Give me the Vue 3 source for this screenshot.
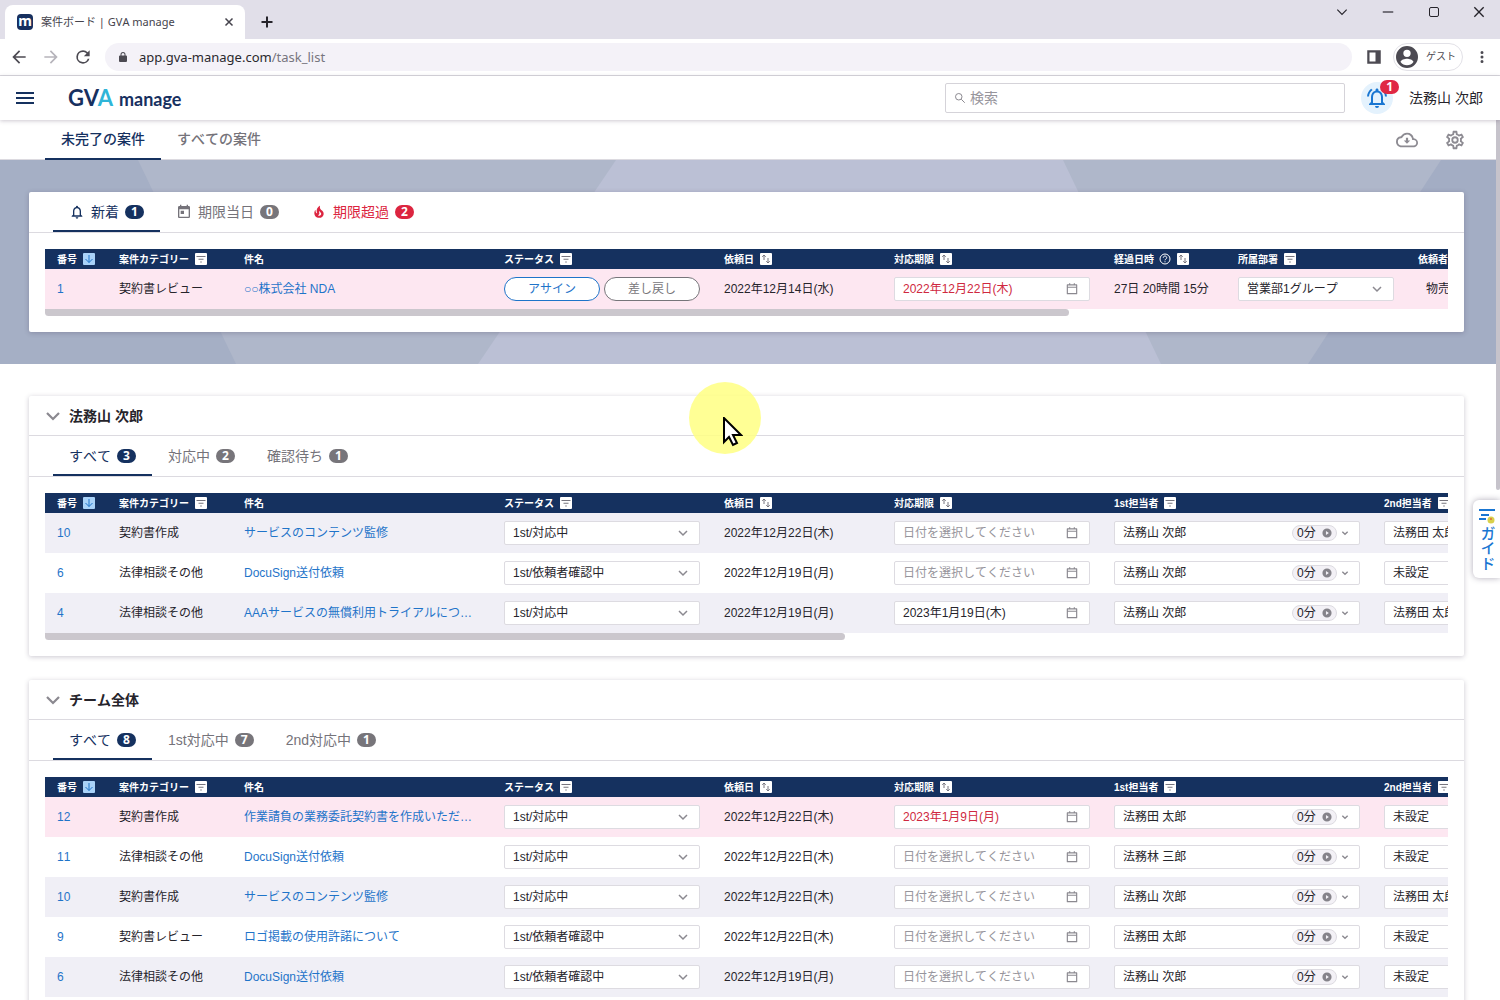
<script setup>
import { h } from 'vue'

const fillIcons = {
  back: 'M20 11H7.8l5.6-5.6L12 4l-8 8 8 8 1.4-1.4L7.8 13H20z',
  forward: 'M4 11h12.2l-5.6-5.6L12 4l8 8-8 8-1.4-1.4 5.6-5.6H4z',
  reload: 'M17.65 6.35A7.95 7.95 0 0 0 12 4a8 8 0 1 0 7.73 10h-2.08A6 6 0 1 1 12 6c1.66 0 3.14.69 4.22 1.78L13 11h7V4z',
  lock: 'M18 9h-1V7A5 5 0 0 0 7 7v2H6a2 2 0 0 0-2 2v9a2 2 0 0 0 2 2h12a2 2 0 0 0 2-2v-9a2 2 0 0 0-2-2zM9 9V7a3 3 0 0 1 6 0v2z',
  panel: 'M3 3h18v18H3zM6 6v12h8V6z',
  avatar: 'M12 0a12 12 0 1 0 0 24 12 12 0 0 0 0-24zm0 4a4 4 0 1 1 0 8 4 4 0 0 1 0-8zm0 17a9 9 0 0 1-7-3.6c0-2.3 4.7-3.6 7-3.6s7 1.300 7 3.600A9 9 0 0 1 12 21z',
  dots: 'M12 8a2 2 0 1 0 0-4 2 2 0 0 0 0 4zm0 2a2 2 0 1 0 0 4 2 2 0 0 0 0-4zm0 6a2 2 0 1 0 0 4 2 2 0 0 0 0-4z',
  menu: 'M0 4h24v2.600H0zm0 6.700h24v2.600H0zm0 6.700h24V20H0z',
  ringing: 'M7.580 4.080 6.150 2.650C3.750 4.480 2.170 7.300 2.030 10.500h2c.15-2.650 1.510-4.970 3.550-6.420zm12.390 6.420h2c-.15-3.200-1.730-6.020-4.120-7.850l-1.420 1.430c2.020 1.450 3.390 3.770 3.540 6.420zM18 11c0-3.070-1.640-5.640-4.500-6.320V4c0-.83-.67-1.500-1.500-1.500s-1.500.67-1.500 1.500v.68C7.630 5.360 6 7.920 6 11v5l-2 2v1h16v-1l-2-2zm-2 6H8v-6c0-2.480 1.510-4.500 4-4.500s4 2.020 4 4.500zm-4 5a2 2 0 0 0 2-2h-4a2 2 0 0 0 2 2z',
  bell: 'M12 22a2 2 0 0 0 2-2h-4c0 1.100.9 2 2 2zm6-6v-5c0-3.070-1.630-5.640-4.500-6.320V4a1.500 1.500 0 0 0-3 0v.68C7.640 5.360 6 7.920 6 11v5l-2 2v1h16v-1zm-2 1H8v-6c0-2.480 1.510-4.500 4-4.500s4 2.020 4 4.500z',
  today: 'M19 3h-1V1h-2v2H8V1H6v2H5a2 2 0 0 0-2 2v14c0 1.100.9 2 2 2h14a2 2 0 0 0 2-2V5a2 2 0 0 0-2-2zm0 16H5V8h14zM7 10h5v5H7z',
  fire: 'M19.480 12.350c-1.570-4.080-7.160-4.300-5.810-10.230.1-.44-.37-.78-.75-.55C9.290 3.710 6.680 8 8.870 13.620c.18.46-.36.890-.75.590-1.810-1.370-2-3.340-1.840-4.750.06-.52-.62-.77-.91-.34C4.690 10.160 4 11.840 4 14.370c.38 5.600 5.110 7.320 6.810 7.540 2.430.31 5.060-.14 6.950-1.870 2.080-1.930 2.840-5.010 1.720-7.690zm-9.280 5.030c1.440-.35 2.180-1.390 2.380-2.310.33-1.430-.96-2.830-.09-5.090.33 1.870 3.270 3.040 3.270 5.080.08 2.530-2.660 4.700-5.560 2.320z',
  play: 'M12 1a11 11 0 1 0 0 22 11 11 0 0 0 0-22zM9.500 17V7l7 5z',
  cloud: 'M19.350 10.040A7.490 7.490 0 0 0 12 4C9.110 4 6.600 5.640 5.350 8.040A5.994 5.994 0 0 0 0 14c0 3.310 2.690 6 6 6h13c2.760 0 5-2.240 5-5 0-2.640-2.050-4.780-4.650-4.960zM19 18H6a4 4 0 0 1-.44-7.970l1.070-.11.5-.95A5.470 5.470 0 0 1 12 6c2.620 0 4.880 1.860 5.390 4.430l.3 1.500 1.530.11A2.980 2.980 0 0 1 19 18zm-5.800-8.500h-2.400v3H8.500l3.500 3.500 3.500-3.500h-2.300z',
  gear: 'M19.430 12.980c.04-.32.07-.64.07-.98s-.03-.66-.07-.98l2.110-1.650c.19-.15.24-.42.12-.64l-2-3.460a.5.5 0 0 0-.61-.22l-2.490 1a7.300 7.300 0 0 0-1.690-.98l-.38-2.650A.49.49 0 0 0 14 2h-4a.49.49 0 0 0-.49.420l-.38 2.650c-.61.250-1.170.590-1.690.98l-2.490-1a.5.5 0 0 0-.61.220l-2 3.460c-.13.220-.07.490.12.640l2.110 1.650a7.900 7.900 0 0 0 0 1.960l-2.110 1.650a.5.5 0 0 0-.12.640l2 3.460c.12.220.39.300.61.220l2.490-1c.52.400 1.080.730 1.690.980l.38 2.650c.03.240.24.420.49.420h4c.25 0 .46-.18.490-.42l.38-2.650c.61-.25 1.170-.59 1.690-.98l2.490 1c.23.090.49 0 .61-.22l2-3.460a.5.5 0 0 0-.12-.64zm-1.980-1.710c.04.310.05.520.05.730s-.02.430-.05.730l-.14 1.130.89.700 1.080.840-.7 1.210-1.270-.51-1.040-.42-.9.680c-.43.320-.84.560-1.250.730l-1.060.43-.16 1.130-.2 1.350h-1.400l-.19-1.350-.16-1.130-1.060-.43c-.43-.18-.83-.41-1.230-.71l-.91-.7-1.060.43-1.270.51-.7-1.210 1.080-.84.890-.7-.14-1.130a7 7 0 0 1 0-1.480l.14-1.130-.89-.7-1.080-.84.7-1.210 1.270.510 1.040.420.9-.68c.43-.32.840-.56 1.250-.73l1.060-.43.160-1.130.2-1.350h1.390l.19 1.350.16 1.130 1.060.430c.43.180.83.410 1.230.710l.91.700 1.060-.43 1.270-.51.7 1.210-1.070.850-.89.700zM12 8a4 4 0 1 0 0 8 4 4 0 0 0 0-8zm0 6a2 2 0 1 1 0-4 2 2 0 0 1 0 4z',
  calendar: 'M20 4h-3V2h-2v2H9V2H7v2H4a1 1 0 0 0-1 1v15a1 1 0 0 0 1 1h16a1 1 0 0 0 1-1V5a1 1 0 0 0-1-1zm-1 15H5V10h14zM5 8V6h14v2z'
}

const lineIcons = {
  close: 'M5 5l14 14M19 5L5 19',
  plus: 'M12 1v22M1 12h22',
  chevron: 'M4 8l8 8 8-8',
  minimize: 'M3 12h18',
  maximize: 'M6 3h12q3 0 3 3v12q0 3-3 3H6q-3 0-3-3V6q0-3 3-3z',
  search: 'M9.500 3a6.500 6.500 0 1 1 0 13 6.500 6.500 0 0 1 0-13M14.500 14.500l7 7',
  down: 'M12 4v15M5 12l7 7 7-7',
  filter: 'M3 7h18M7 12.500h10M10.500 18h3',
  sort: 'M8 14V4M4.500 7.500L8 4l3.500 3.500M16 10v10M12.500 16.500L16 20l3.500-3.500',
  help: 'M12 2a10 10 0 1 1 0 20 10 10 0 0 1 0-20M8.500 9.500c0-4.500 7-4.500 7 0 0 2.500-3.500 2.500-3.500 5M12 16.500v2'
}

const Icon = (props) =>
  h('svg', { viewBox: '0 0 24 24', class: 'icon', 'aria-hidden': 'true' }, [
    fillIcons[props.name]
      ? h('path', { d: fillIcons[props.name], fill: 'currentColor', 'fill-rule': 'evenodd' })
      : h('path', { d: lineIcons[props.name], fill: 'none', stroke: 'currentColor', 'stroke-width': props.weight || 2 })
  ])
Icon.props = ['name', 'weight']

const baseColumns = [
  { label: '番号', width: 62, tool: 'down' },
  { label: '案件カテゴリー', width: 125, tool: 'filter' },
  { label: '件名', width: 260 },
  { label: 'ステータス', width: 220, tool: 'filter' },
  { label: '依頼日', width: 170, tool: 'sort' },
  { label: '対応期限', width: 220, tool: 'sort' }
]
const newColumns = [
  ...baseColumns,
  { label: '経過日時', width: 124, tool: 'sort', help: true },
  { label: '所属部署', width: 180, tool: 'filter' },
  { label: '依頼者', width: 180 }
]
const taskColumns = [
  ...baseColumns,
  { label: '1st担当者', width: 270, tool: 'filter' },
  { label: '2nd担当者', width: 270, tool: 'filter' }
]

const row = (id, category, title, status, requested, due, first, second, late) =>
  ({ id, category, title, status, requested, due, first, second, late })

const working = '1st/対応中'
const checking = '1st/依頼者確認中'
const cards = [
  {
    tabs: [
      { label: '新着', count: 1, icon: 'bell' },
      { label: '期限当日', count: 0, icon: 'today' },
      { label: '期限超過', count: 2, icon: 'fire', alert: true }
    ],
    columns: newColumns,
    thumb: 73,
    rows: [{
      ...row(1, '契約書レビュー', '○○株式会社 NDA', '', '2022年12月14日(水)', '2022年12月22日(木)', '', '', true),
      elapsed: '27日 20時間 15分', department: '営業部1グループ', requester: '物売 太郎'
    }]
  },
  {
    title: '法務山 次郎',
    tabs: [
      { label: 'すべて', count: 3 },
      { label: '対応中', count: 2 },
      { label: '確認待ち', count: 1 }
    ],
    columns: taskColumns,
    thumb: 57,
    rows: [
      row(10, '契約書作成', 'サービスのコンテンツ監修', working, '2022年12月22日(木)', '', '法務山 次郎', '法務田 太郎'),
      row(6, '法律相談その他', 'DocuSign送付依頼', checking, '2022年12月19日(月)', '', '法務山 次郎', '未設定'),
      row(4, '法律相談その他', 'AAAサービスの無償利用トライアルにつ…', working, '2022年12月19日(月)', '2023年1月19日(木)', '法務山 次郎', '法務田 太郎')
    ]
  },
  {
    title: 'チーム全体',
    tabs: [
      { label: 'すべて', count: 8 },
      { label: '1st対応中', count: 7 },
      { label: '2nd対応中', count: 1 }
    ],
    columns: taskColumns,
    thumb: 57,
    rows: [
      row(12, '契約書作成', '作業請負の業務委託契約書を作成いただ…', working, '2022年12月22日(木)', '2023年1月9日(月)', '法務田 太郎', '未設定', true),
      row(11, '法律相談その他', 'DocuSign送付依頼', working, '2022年12月22日(木)', '', '法務林 三郎', '未設定'),
      row(10, '契約書作成', 'サービスのコンテンツ監修', working, '2022年12月22日(木)', '', '法務山 次郎', '法務田 太郎'),
      row(9, '契約書レビュー', 'ロゴ掲載の使用許諾について', checking, '2022年12月22日(木)', '', '法務田 太郎', '未設定'),
      row(6, '法律相談その他', 'DocuSign送付依頼', checking, '2022年12月19日(月)', '', '法務山 次郎', '未設定'),
      row(4, '法律相談その他', 'AAAサービスの無償利用トライアルにつ…', working, '2022年12月19日(月)', '2023年1月19日(木)', '法務山 次郎', '法務田 太郎')
    ]
  }
]
</script>

<template>
  <div class="window">
    <div class="tabstrip">
      <div class="browser-tab">
        <span class="favicon">m</span>
        <span class="tab-title">案件ボード | GVA manage</span>
        <button class="plain" aria-label="タブを閉じる"><Icon name="close" weight="3" class="s12" /></button>
      </div>
      <button class="plain new-tab" aria-label="新しいタブ"><Icon name="plus" weight="4" class="s12" /></button>
      <div class="window-buttons">
        <button class="plain" aria-label="タブを検索"><Icon name="chevron" class="s14" /></button>
        <button class="plain" aria-label="最小化"><Icon name="minimize" class="s14" /></button>
        <button class="plain" aria-label="最大化"><Icon name="maximize" class="s12" /></button>
        <button class="plain" aria-label="閉じる"><Icon name="close" class="s16" /></button>
      </div>
    </div>

    <div class="toolbar">
      <button class="plain" aria-label="戻る"><Icon name="back" class="s20" /></button>
      <button class="plain disabled" aria-label="進む"><Icon name="forward" class="s20" /></button>
      <button class="plain" aria-label="再読み込み"><Icon name="reload" class="s20" /></button>
      <div class="address">
        <Icon name="lock" class="s12" />
        <span class="url">app.gva-manage.com<span class="path">/task_list</span></span>
      </div>
      <button class="plain panel" aria-label="サイドパネル"><Icon name="panel" class="s18" /></button>
      <button class="profile"><Icon name="avatar" class="s22" />ゲスト</button>
      <button class="plain more" aria-label="メニュー"><Icon name="dots" class="s18" /></button>
    </div>

    <header class="app-header">
      <button class="plain navy" aria-label="ナビゲーション"><Icon name="menu" class="s18" /></button>
      <a href="#" class="logo"><span class="gv">GV<span class="cyan">A</span></span><span class="product">manage</span></a>
      <label class="search">
        <Icon name="search" class="s12" />
        <input type="text" placeholder="検索" aria-label="検索">
      </label>
      <button class="notify" aria-label="通知"><Icon name="ringing" class="s24" /><span class="badge red">1</span></button>
      <span class="user">法務山 次郎</span>
    </header>

    <div class="viewport">
      <main class="page">
        <nav class="main-tabs">
          <a href="#" class="main-tab active">未完了の案件</a>
          <a href="#" class="main-tab">すべての案件</a>
          <div class="page-tools">
            <button class="plain" aria-label="ダウンロード"><Icon name="cloud" class="s22" /></button>
            <button class="plain" aria-label="設定"><Icon name="gear" class="s22" /></button>
          </div>
        </nav>

        <div v-for="(card, c) in cards" :key="c" :class="c === 0 ? 'hero' : 'section'">
          <svg v-if="c === 0" class="backdrop" viewBox="0 0 1496 204" preserveAspectRatio="none" aria-hidden="true">
            <path fill="#afb7ca" d="M0 0h1496v204H0z" />
            <path fill="#a5afc5" d="M0 0h138l98 204H0z" />
            <path fill="#bbc0d5" d="M616 0h447l98 204H478z" />
            <path fill="#a3adc4" d="M1441 0h55v204h-188z" />
          </svg>
          <section class="card">
            <h2 v-if="card.title" class="card-title"><Icon name="chevron" weight="3" class="s18" />{{ card.title }}</h2>
            <div class="tabs">
              <button v-for="(tab, t) in card.tabs" :key="t" class="tab" :class="{ active: t === 0, alert: tab.alert }">
                <Icon v-if="tab.icon" :name="tab.icon" class="s16" />
                {{ tab.label }}
                <span class="badge">{{ tab.count }}</span>
              </button>
            </div>
            <div class="table-area">
              <div class="table-scroll">
                <table>
                  <colgroup>
                    <col v-for="col in card.columns" :key="col.label" :style="{ width: col.width + 'px' }">
                  </colgroup>
                  <thead>
                    <tr>
                      <th v-for="col in card.columns" :key="col.label" scope="col">
                        <div class="th">
                          <span>{{ col.label }}</span>
                          <Icon v-if="col.help" name="help" weight="2" class="s12" />
                          <button v-if="col.tool" class="tool" :class="{ on: col.tool === 'down' }" :aria-label="col.label + 'の並び替え・絞り込み'">
                            <Icon :name="col.tool" weight="2" class="s12" />
                          </button>
                        </div>
                      </th>
                    </tr>
                  </thead>
                  <tbody>
                    <tr v-for="item in card.rows" :key="item.id" :class="{ late: item.late }">
                      <td><a href="#">{{ item.id }}</a></td>
                      <td>{{ item.category }}</td>
                      <td><a href="#">{{ item.title }}</a></td>
                      <td>
                        <div v-if="item.status" class="field">
                          <select :aria-label="'ステータス ' + item.id"><option>{{ item.status }}</option></select>
                          <Icon name="chevron" weight="3" class="s12" />
                        </div>
                        <div v-else class="actions">
                          <button class="pill assign">アサイン</button>
                          <button class="pill">差し戻し</button>
                        </div>
                      </td>
                      <td>{{ item.requested }}</td>
                      <td>
                        <div class="field" :class="{ overdue: item.late }">
                          <input type="text" placeholder="日付を選択してください" :value="item.due" :aria-label="'対応期限 ' + item.id">
                          <Icon name="calendar" class="s14" />
                        </div>
                      </td>
                      <template v-if="item.elapsed">
                        <td>{{ item.elapsed }}</td>
                        <td>
                          <div class="field">
                            <select aria-label="所属部署"><option>{{ item.department }}</option></select>
                            <Icon name="chevron" weight="3" class="s12" />
                          </div>
                        </td>
                        <td><span class="requester">{{ item.requester }}</span></td>
                      </template>
                      <template v-else>
                        <td v-for="(person, p) in [item.first, item.second]" :key="p">
                          <div class="field person">
                            <select :aria-label="'担当者 ' + item.id"><option>{{ person }}</option></select>
                            <button class="timer">0分<Icon name="play" class="s10" /></button>
                            <Icon name="chevron" weight="4" class="s8" />
                          </div>
                        </td>
                      </template>
                    </tr>
                  </tbody>
                </table>
              </div>
              <div class="scroll-thumb" :style="{ width: card.thumb + '%' }"></div>
            </div>
          </section>
        </div>
      </main>
      <div class="page-scroll"><div class="page-thumb"></div></div>
    </div>

    <button class="guide">
      <svg viewBox="0 0 16 16" class="s16" aria-hidden="true">
        <path d="M0 2h16M2 7h8M0 11h7" fill="none" stroke="#1976d2" stroke-width="2" />
        <circle cx="12" cy="12" r="3.500" fill="#d9d04c" />
        <circle cx="12" cy="11" r="1" fill="#e06a3a" />
      </svg>
      <span>ガイド</span>
    </button>

    <div class="pointer">
      <svg viewBox="0 0 20 30" class="cursor" aria-hidden="true">
        <path d="M1 1v24l5-5 4 8 4-2-4-8h8z" fill="#fff" stroke="#000" stroke-width="2" />
      </svg>
    </div>
  </div>
</template>

<style>
body {
  margin: 0;
  background: #fff;
}
</style>

<style scoped>
* {
  box-sizing: border-box;
}
.window {
  height: 100vh;
  display: flex;
  flex-direction: column;
  overflow: hidden;
  color: #26242b;
  font: 12px/20px "Liberation Sans", "Noto Sans CJK JP", sans-serif;
  font-kerning: none;
}
button, input, select {
  font: inherit;
  font-kerning: none;
  color: inherit;
  margin: 0;
}
a {
  color: #1f74c9;
  text-decoration: none;
}
.icon {
  display: block;
  flex: none;
}
.s8 { width: 8px; height: 8px; }
.s10 { width: 10px; height: 10px; }
.s12 { width: 12px; height: 12px; }
.s14 { width: 14px; height: 14px; }
.s16 { width: 16px; height: 16px; }
.s18 { width: 18px; height: 18px; }
.s20 { width: 20px; height: 20px; }
.s22 { width: 22px; height: 22px; }
.s24 { width: 24px; height: 24px; }
.plain {
  display: flex;
  align-items: center;
  justify-content: center;
  padding: 0;
  border: 0;
  background: none;
}

/* Browser frame */
.tabstrip {
  flex: none;
  height: 39px;
  display: flex;
  padding-left: 5px;
  background: #e1dfe9;
}
.browser-tab {
  width: 240px;
  height: 34px;
  margin-top: 5px;
  padding: 0 10px 0 12px;
  display: flex;
  align-items: center;
  gap: 8px;
  border-radius: 8px 8px 0 0;
  background: #fff;
  color: #45434c;
  font-family: "Noto Sans", "Noto Sans CJK JP", sans-serif;
}
.favicon {
  width: 16px;
  height: 16px;
  border-radius: 4px;
  background: #17305f;
  color: #fff;
  font: bold 14px/14px "Noto Sans", sans-serif;
  text-align: center;
}
.tab-title {
  flex: 1;
  font-size: 11px;
  white-space: nowrap;
}
.new-tab {
  margin: 5px 0 0 16px;
}
.window-buttons {
  margin-left: auto;
  display: flex;
  height: 23px;
}
.window-buttons .plain {
  width: 46px;
}
.window-buttons .plain:last-child {
  width: 43px;
}
.toolbar {
  flex: none;
  height: 37px;
  display: flex;
  align-items: center;
  padding: 0 9px;
  border-bottom: 1px solid #d9d8de;
  color: #4c4a52;
  gap: 12px;
}
.disabled {
  color: #b6b4bb;
}
.address {
  flex: 1;
  height: 28px;
  padding: 0 12px;
  display: flex;
  align-items: center;
  gap: 10px;
  border-radius: 14px;
  background: #f4f2f8;
}
.url {
  color: #2a292e;
  font: 13px/20px "Noto Sans", sans-serif;
}
.path {
  color: #77757e;
}
.panel {
  margin-left: 1px;
}
.profile {
  width: 70px;
  height: 28px;
  padding: 0 2px;
  display: flex;
  align-items: center;
  gap: 8px;
  border: 1px solid #e2e1e7;
  border-radius: 14px;
  background: #fff;
  font-size: 10px;
  white-space: nowrap;
  margin-left: -2px;
}
.more {
  margin-left: -2px;
}

/* Application header */
.app-header {
  flex: none;
  position: relative;
  z-index: 1;
  height: 44px;
  display: flex;
  align-items: center;
  padding: 0 17px 0 16px;
  background: #fff;
  box-shadow: 0 1px 4px rgba(60, 40, 70, .25);
}
.navy {
  color: #15315f;
}
.logo {
  display: flex;
  align-items: baseline;
  gap: 6px;
  margin-left: 34px;
  color: #17305f;
  font: bold 18px/28px Lato, sans-serif;
}
.gv {
  font-size: 22px;
}
.cyan {
  color: #2fb5d8;
}
.search {
  width: 400px;
  height: 30px;
  margin-left: auto;
  padding: 0 8px;
  display: flex;
  align-items: center;
  gap: 4px;
  border: 1px solid #d5d3d9;
  border-radius: 2px;
  color: #8b8990;
  font-size: 14px;
}
.search input {
  flex: 1;
  min-width: 0;
  padding: 0;
  border: 0;
  outline: 0;
  background: none;
}
input::placeholder {
  color: #97959c;
  opacity: 1;
}
.notify {
  position: relative;
  width: 32px;
  height: 32px;
  margin: 0 16px;
  padding: 4px;
  border: 0;
  border-radius: 50%;
  background: #e4f2fd;
  color: #1976d2;
}
.user {
  font-size: 14px;
}
.badge {
  width: 19px;
  height: 14px;
  border-radius: 7px;
  background: #77757a;
  color: #fff;
  font: bold 12px/14px "Open Sans", sans-serif;
  text-align: center;
}
.badge.red {
  position: absolute;
  top: -2px;
  right: -6px;
  background: #e02844;
}

/* Page */
.viewport {
  flex: 1;
  min-height: 0;
  display: flex;
}
.page {
  flex: 1;
  min-width: 0;
  overflow: hidden;
}
.page-scroll {
  width: 4px;
}
.page-thumb {
  height: 42%;
  background: #c6c3cb;
  border-radius: 0 0 2px 2px;
}
.main-tabs {
  height: 40px;
  display: flex;
  padding: 0 30px 0 45px;
  border-bottom: 1px solid #dcdae0;
}
.main-tab {
  height: 40px;
  padding: 0 16px;
  border-bottom: 2px solid transparent;
  color: #75737a;
  font-size: 14px;
  font-weight: 500;
  line-height: 38px;
}
.main-tab.active {
  border-color: #15315f;
  color: #15315f;
}
.page-tools {
  display: flex;
  gap: 26px;
  margin-left: auto;
  color: #8d8b92;
}
.hero {
  position: relative;
  padding: 32px 32px 32px 29px;
  margin-bottom: 32px;
}
.backdrop {
  position: absolute;
  inset: 0;
  width: 100%;
  height: 100%;
}
.section {
  padding: 0 32px 24px 29px;
}
.card {
  position: relative;
  border-radius: 2px;
  background: #fff;
  box-shadow: 0 1px 5px rgba(50, 40, 70, .25);
}
.card-title {
  height: 40px;
  margin: 0;
  padding: 0 15px;
  display: flex;
  align-items: center;
  gap: 7px;
  border-bottom: 1px solid #dcdae0;
  font-size: 14px;
}
.card-title .icon {
  color: #8b8990;
}
.tabs {
  height: 41px;
  padding: 0 24px;
  display: flex;
  border-bottom: 1px solid #dcdae0;
}
.tab {
  padding: 0 16px;
  display: flex;
  align-items: center;
  gap: 6px;
  border: 0;
  border-bottom: 2px solid transparent;
  border-top: 2px solid transparent;
  background: none;
  color: #75737a;
  font-size: 14px;
}
.tab.active {
  border-bottom-color: #15315f;
  color: #15315f;
}
.tab.active .badge {
  background: #15315f;
}
.tab.alert {
  color: #dc2540;
}
.tab.alert .icon {
  padding: 1px;
}
.tab.alert .badge {
  background: #dc2540;
}
.table-area {
  padding: 16px;
}
.table-scroll {
  overflow: hidden;
}
.scroll-thumb {
  height: 7px;
  border-radius: 0 4px 4px 4px;
  background: #cbc7cd;
}
table {
  width: 0;
  min-width: 100%;
  table-layout: fixed;
  border-collapse: collapse;
}
th, td {
  padding: 0 12px;
  text-align: left;
  white-space: nowrap;
}
th {
  height: 20px;
  background: #15315f;
  color: #fff;
  font-size: 10px;
}
.th {
  height: 20px;
  display: flex;
  align-items: center;
  gap: 6px;
}
.th span {
  padding-top: 2px;
  line-height: 18px;
}
.th .icon {
  margin-left: -1px;
}
.tool {
  width: 12px;
  height: 12px;
  padding: 0;
  border: 0;
  border-radius: 1px;
  background: #fff;
  color: #77757e;
}
.th .tool .icon {
  margin: 0;
}
.tool.on {
  background: #a9d2f8;
  color: #1f74c9;
}
td {
  height: 40px;
}
tbody tr:nth-child(odd) {
  background: #f0eff6;
}
tbody tr.late {
  background: #fde7f1;
}
.field {
  height: 24px;
  padding: 0 10px 0 8px;
  display: flex;
  align-items: center;
  border: 1px solid #dddbe1;
  border-radius: 2px;
  background: #fff;
  color: #8b8990;
}
.field input, .field select {
  flex: 1;
  min-width: 0;
  height: 22px;
  padding: 0;
  border: 0;
  outline: 0;
  appearance: none;
  background: none;
  color: #26242b;
}
.field input:not(:placeholder-shown) {
  padding-bottom: 3px;
}
.field.overdue input {
  color: #cf2840;
}
.person {
  gap: 4px;
}
.timer {
  width: 45px;
  height: 16px;
  padding: 0 4px;
  display: flex;
  align-items: center;
  justify-content: space-between;
  border: 1px solid #dddbe1;
  border-radius: 8px;
  background: #f3f1f6;
  color: #26242b;
}
.timer .icon {
  color: #85838a;
}
.actions {
  display: flex;
  gap: 4px;
}
.pill {
  flex: 1;
  height: 24px;
  padding: 0;
  border: 1px solid #77757a;
  border-radius: 12px;
  background: #fff;
  color: #77757a;
}
.assign {
  border-color: #1f74c9;
  color: #1f74c9;
}
.requester {
  padding-left: 8px;
}

/* Floating layers */
.guide {
  position: absolute;
  right: 0;
  top: 500px;
  width: 27px;
  height: 78px;
  padding: 8px 0 0;
  display: flex;
  flex-direction: column;
  align-items: center;
  gap: 2px;
  border: 0;
  border-radius: 6px 0 0 6px;
  background: #fff;
  box-shadow: 0 0 6px rgba(60, 50, 80, .4);
  color: #1976d2;
  font-size: 15px;
  font-weight: 500;
}
.guide span {
  writing-mode: vertical-rl;
}
.pointer {
  position: absolute;
  left: 689px;
  top: 382px;
  width: 72px;
  height: 72px;
  border-radius: 50%;
  background: rgba(255, 255, 130, .85);
}
.cursor {
  position: absolute;
  left: 34px;
  top: 35px;
  width: 20px;
  height: 30px;
}
</style>
